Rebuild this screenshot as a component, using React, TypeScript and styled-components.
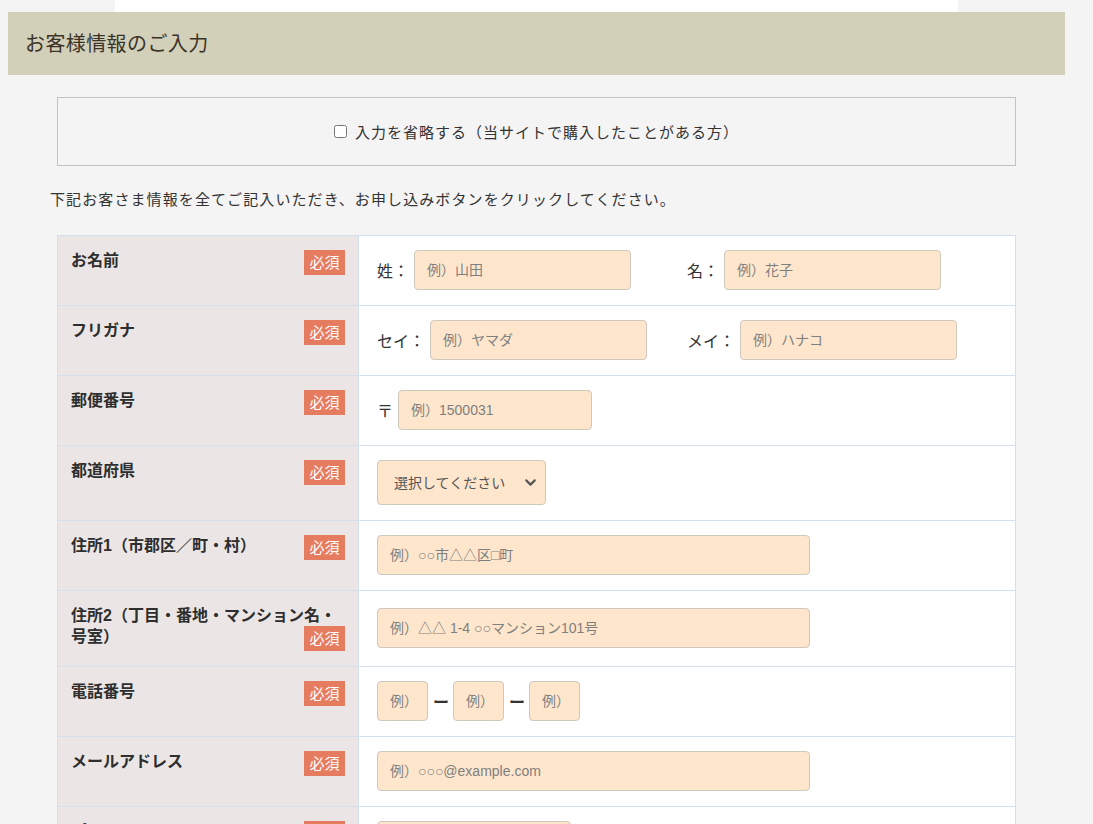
import React from "react";
import styled, { createGlobalStyle } from "styled-components";
import { ChevronDown } from "lucide-react";

const GlobalStyle = createGlobalStyle`
  html, body {
    margin: 0;
    padding: 0;
    background: #f4f4f4;
    font-family: "Liberation Sans", "Noto Sans CJK JP", sans-serif;
    color: #333;
  }
`;

const Page = styled.div`
  width: 1093px;
  height: 824px;
  overflow: hidden;
`;

const TopStrip = styled.div`
  margin-left: 115px;
  width: 843px;
  height: 12px;
  background: #fff;
`;

const Heading = styled.h2`
  margin: 0 0 0 8px;
  width: 1057px;
  height: 63px;
  box-sizing: border-box;
  padding: 0 17px 2px;
  display: flex;
  align-items: center;
  background: #d3d0b9;
  font-size: 20px;
  font-weight: 400;
  letter-spacing: 0.4px;
  color: #3b3328;
`;

const Main = styled.div`
  padding: 22px 0 0 50px;
`;

const SkipBox = styled.label`
  margin-left: 7px;
  width: 959px;
  height: 69px;
  box-sizing: border-box;
  border: 1px solid #c2c2c2;
  display: flex;
  align-items: center;
  justify-content: center;
  gap: 8px;
  font-size: 15px;
  letter-spacing: 1px;
  cursor: pointer;

  input {
    margin: 0;
    width: 13px;
    height: 13px;
  }
`;

const Lead = styled.p`
  margin: 22px 0 26px;
  font-size: 15px;
  letter-spacing: 1.1px;
`;

const Table = styled.div`
  margin-left: 7px;
  width: 959px;
  box-sizing: border-box;
  border: 1px solid #d4e0ee;
  border-bottom: none;
  background: #fff;
`;

const Row = styled.div`
  display: grid;
  grid-template-columns: 301px 1fr;
  border-bottom: 1px solid #d4e0ee;
`;

const LabelCell = styled.div`
  display: flow-root;
  background: #ebe6e5;
  border-right: 1px solid #d4e0ee;
  padding: 14px 13px 15px 13px;
  font-size: 16px;
  line-height: 21px;
  font-weight: 700;
  color: #2e2e2e;
`;

const Badge = styled.span`
  float: right;
  width: 41px;
  height: 25px;
  line-height: 25px;
  text-align: center;
  background: #e67c5f;
  color: #fff;
  font-size: 15px;
  font-weight: 400;
`;

const ValueCell = styled.div`
  padding: 14px 18px 15px;
  display: flex;
  align-items: center;
  gap: 5px;
  font-size: 16px;
`;

const Pair = styled.div`
  display: grid;
  grid-template-columns: 1fr 1fr;
  width: 100%;
`;

const Field = styled.div`
  display: flex;
  align-items: center;
  gap: 5px;
`;

const Input = styled.input<{ $w: number }>`
  width: ${(p) => p.$w}px;
  height: 40px;
  box-sizing: border-box;
  margin: 0;
  padding: 0 12px;
  border: 1px solid #cfc8bd;
  border-radius: 4px;
  background: #fde6cc;
  font-family: inherit;
  font-size: 14px;
  color: #333;

  &::placeholder {
    color: #7f7f7f;
  }
`;

const Dash = styled.span`
  width: 15px;
  text-align: center;
  font-weight: 700;
`;

const SelectWrap = styled.div`
  position: relative;
  width: 169px;
  height: 45px;
`;

const Select = styled.select`
  width: 100%;
  height: 100%;
  appearance: none;
  margin: 0;
  padding: 0 0 0 16px;
  border: 1px solid #cfc8bd;
  border-radius: 4px;
  background: #fde6cc;
  font-family: inherit;
  font-size: 14px;
  color: #555;
`;

const Chevron = styled(ChevronDown)`
  position: absolute;
  right: 7px;
  top: 14px;
  pointer-events: none;
  color: #555;
`;

const Req = () => <Badge>必須</Badge>;

export default function App() {
  return (
    <Page>
      <GlobalStyle />
      <TopStrip />
      <Heading>お客様情報のご入力</Heading>
      <Main>
        <SkipBox>
          <input type="checkbox" />
          入力を省略する（当サイトで購入したことがある方）
        </SkipBox>
        <Lead>下記お客さま情報を全てご記入いただき、お申し込みボタンをクリックしてください。</Lead>
        <Table>
          <Row>
            <LabelCell>
              お名前
              <Req />
            </LabelCell>
            <ValueCell>
              <Pair>
                <Field>
                  姓：<Input $w={217} placeholder="例）山田" />
                </Field>
                <Field>
                  名：<Input $w={217} placeholder="例）花子" />
                </Field>
              </Pair>
            </ValueCell>
          </Row>
          <Row>
            <LabelCell>
              フリガナ
              <Req />
            </LabelCell>
            <ValueCell>
              <Pair>
                <Field>
                  セイ：<Input $w={217} placeholder="例）ヤマダ" />
                </Field>
                <Field>
                  メイ：<Input $w={217} placeholder="例）ハナコ" />
                </Field>
              </Pair>
            </ValueCell>
          </Row>
          <Row>
            <LabelCell>
              郵便番号
              <Req />
            </LabelCell>
            <ValueCell>
              〒<Input $w={194} placeholder="例）1500031" />
            </ValueCell>
          </Row>
          <Row>
            <LabelCell>
              都道府県
              <Req />
            </LabelCell>
            <ValueCell>
              <SelectWrap>
                <Select defaultValue="">
                  <option value="">選択してください</option>
                </Select>
                <Chevron size={17} strokeWidth={3} />
              </SelectWrap>
            </ValueCell>
          </Row>
          <Row>
            <LabelCell>
              住所1（市郡区／町・村）
              <Req />
            </LabelCell>
            <ValueCell>
              <Input $w={433} placeholder="例）○○市△△区□町" />
            </ValueCell>
          </Row>
          <Row>
            <LabelCell>
              住所2（丁目・番地・マンション名・号室）
              <Req />
            </LabelCell>
            <ValueCell>
              <Input $w={433} placeholder="例）△△ 1-4 ○○マンション101号" />
            </ValueCell>
          </Row>
          <Row>
            <LabelCell>
              電話番号
              <Req />
            </LabelCell>
            <ValueCell>
              <Input $w={51} placeholder="例）" />
              <Dash>ー</Dash>
              <Input $w={51} placeholder="例）" />
              <Dash>ー</Dash>
              <Input $w={51} placeholder="例）" />
            </ValueCell>
          </Row>
          <Row>
            <LabelCell>
              メールアドレス
              <Req />
            </LabelCell>
            <ValueCell>
              <Input $w={433} placeholder="例）○○○@example.com" />
            </ValueCell>
          </Row>
          <Row>
            <LabelCell>
              パスワード
              <Req />
            </LabelCell>
            <ValueCell>
              <Input $w={194} placeholder="" />
            </ValueCell>
          </Row>
        </Table>
      </Main>
    </Page>
  );
}
